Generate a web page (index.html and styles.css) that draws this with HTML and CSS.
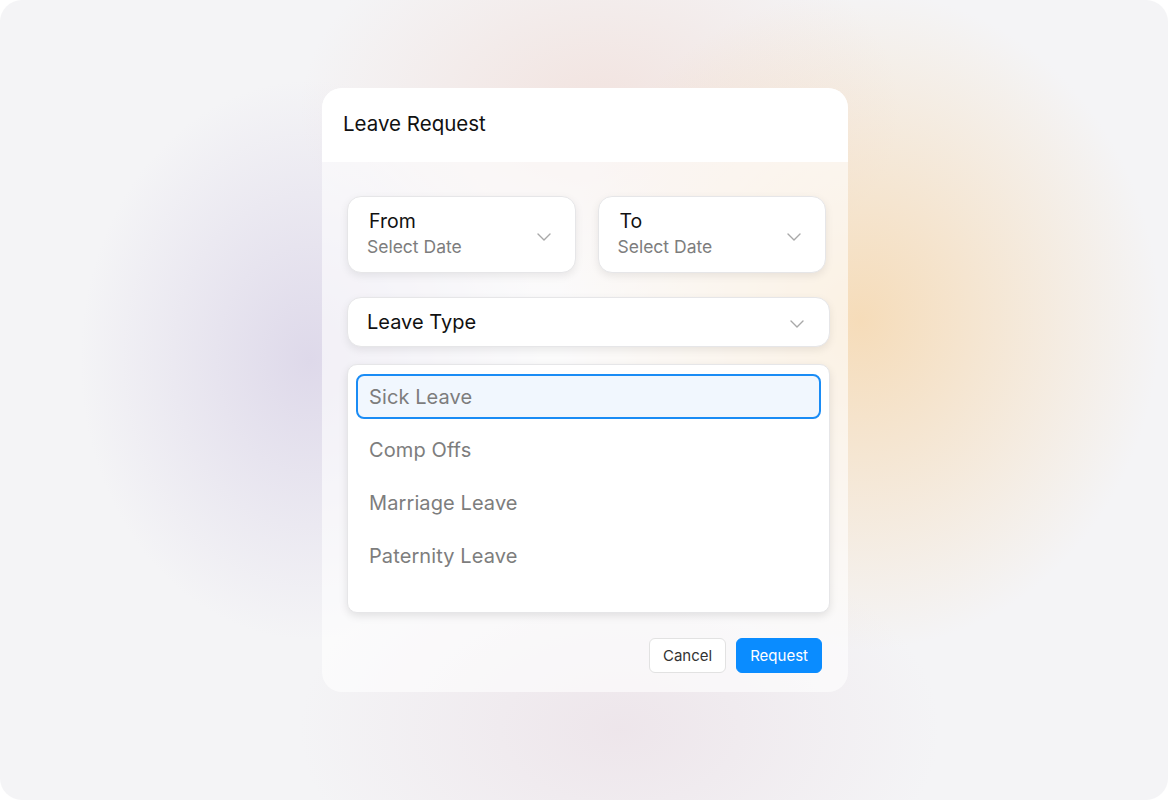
FILE: index.html
```html
<!DOCTYPE html>
<html>
<head>
  <title>Leave Request</title>
  <link rel="stylesheet" href="styles.css">
</head>
<body>
  <div class="stage">
    <div class="dialog">
      <div class="dialog-header">Leave Request</div>
      <div class="dialog-body">
        <div class="date-row">
          <div class="field date-field">
            <div class="field-text">
              <div class="field-label">From</div>
              <div class="field-hint">Select Date</div>
            </div>
            <svg class="chevron" width="14" height="8" viewBox="0 0 14 8"><path d="M1 1l6 6 6-6" fill="none" stroke="#a8a8a8" stroke-width="1.4" stroke-linecap="round" stroke-linejoin="round"/></svg>
          </div>
          <div class="field date-field">
            <div class="field-text">
              <div class="field-label">To</div>
              <div class="field-hint">Select Date</div>
            </div>
            <svg class="chevron" width="14" height="8" viewBox="0 0 14 8"><path d="M1 1l6 6 6-6" fill="none" stroke="#a8a8a8" stroke-width="1.4" stroke-linecap="round" stroke-linejoin="round"/></svg>
          </div>
        </div>

        <div class="field type-field">
          <div class="type-label">Leave Type</div>
          <svg class="chevron" width="14" height="8" viewBox="0 0 14 8"><path d="M1 1l6 6 6-6" fill="none" stroke="#a8a8a8" stroke-width="1.4" stroke-linecap="round" stroke-linejoin="round"/></svg>
        </div>

        <div class="options">
          <div class="option selected">Sick Leave</div>
          <div class="option">Comp Offs</div>
          <div class="option">Marriage Leave</div>
          <div class="option">Paternity Leave</div>
        </div>

        <div class="actions">
          <button class="btn btn-cancel">Cancel</button>
          <button class="btn btn-primary">Request</button>
        </div>
      </div>
    </div>
  </div>
</body>
</html>
```

FILE: styles.css
```css
body {
  margin: 0;
  background-color: #ffffff;
  font-family: Inter, "Noto Sans", sans-serif;
}

.stage {
  width: 1168px;
  height: 800px;
  border-radius: 22px;
  overflow: hidden;
  display: flex;
  justify-content: center;
  align-items: flex-start;
  box-sizing: border-box;
  padding-top: 88px;
  padding-left: 2px;
  background-color: #f4f4f6;
  background-image:
    radial-gradient(ellipse 230px 280px at 310px 360px, rgba(200, 190, 222, 0.5), rgba(200, 190, 222, 0) 100%),
    radial-gradient(ellipse 300px 330px at 860px 320px, rgba(246, 214, 170, 0.8), rgba(246, 214, 170, 0) 100%),
    radial-gradient(ellipse 300px 200px at 600px 110px, rgba(240, 210, 200, 0.5), rgba(240, 210, 200, 0) 100%),
    radial-gradient(ellipse 320px 200px at 620px 730px, rgba(228, 208, 218, 0.4), rgba(228, 208, 218, 0) 100%);
}

.dialog {
  width: 526px;
  height: 604px;
  border-radius: 20px;
  overflow: hidden;
  display: flex;
  flex-direction: column;
  background-color: rgba(255, 255, 255, 0.6);
}

.dialog-header {
  height: 74px;
  box-sizing: border-box;
  padding: 23px 21px 0;
  background-color: #ffffff;
  font-size: 20.5px;
  color: #111111;
}

.dialog-body {
  flex: 1;
  padding: 34px 18px 0 25px;
}

.date-row {
  display: flex;
  gap: 22px;
  padding-right: 4px;
}

.field {
  background-color: #ffffff;
  border: 1px solid #e6e6e8;
  box-shadow: 0 3px 8px rgba(0, 0, 0, 0.08);
  display: flex;
  align-items: center;
  justify-content: space-between;
  box-sizing: border-box;
}

.date-field {
  flex: 1;
  height: 77px;
  border-radius: 14px;
  padding: 0 24px 0 19px;
}

.field-label {
  font-size: 19.5px;
  color: #111111;
  padding-left: 2px;
  line-height: 24px;
}

.field-hint {
  font-size: 17.5px;
  color: #7d7d7d;
  line-height: 28px;
}

.chevron {
  margin-top: 4px;
}

.type-field {
  margin-top: 24px;
  height: 50px;
  border-radius: 14px;
  padding: 0 25px 0 19px;
}

.type-label {
  font-size: 20px;
  color: #111111;
}

.options {
  margin-top: 17px;
  height: 249px;
  box-sizing: border-box;
  background-color: #ffffff;
  border: 1px solid #e6e6e8;
  border-radius: 10px;
  box-shadow: 0 3px 8px rgba(0, 0, 0, 0.1);
  padding: 9px 8px 0;
}

.option {
  height: 45px;
  box-sizing: border-box;
  display: flex;
  align-items: center;
  padding-left: 11px;
  margin-bottom: 8px;
  font-size: 20px;
  letter-spacing: 0.1px;
  color: #7d7d7d;
  border: 2px solid transparent;
  border-radius: 8px;
}

.option.selected {
  background-color: #f1f7fe;
  border-color: #1a8cf5;
}

.actions {
  display: flex;
  justify-content: flex-end;
  gap: 10px;
  margin-top: 25px;
  padding-right: 8px;
}

.btn {
  height: 35px;
  border-radius: 6px;
  font-family: Inter, "Noto Sans", sans-serif;
  font-size: 15px;
  padding: 0 13px;
  cursor: pointer;
}

.btn-cancel {
  background-color: #ffffff;
  border: 1px solid #e2e2e2;
  color: #333333;
}

.btn-primary {
  background-color: #0a8cff;
  border: 1px solid #0a8cff;
  color: #ffffff;
}
```
